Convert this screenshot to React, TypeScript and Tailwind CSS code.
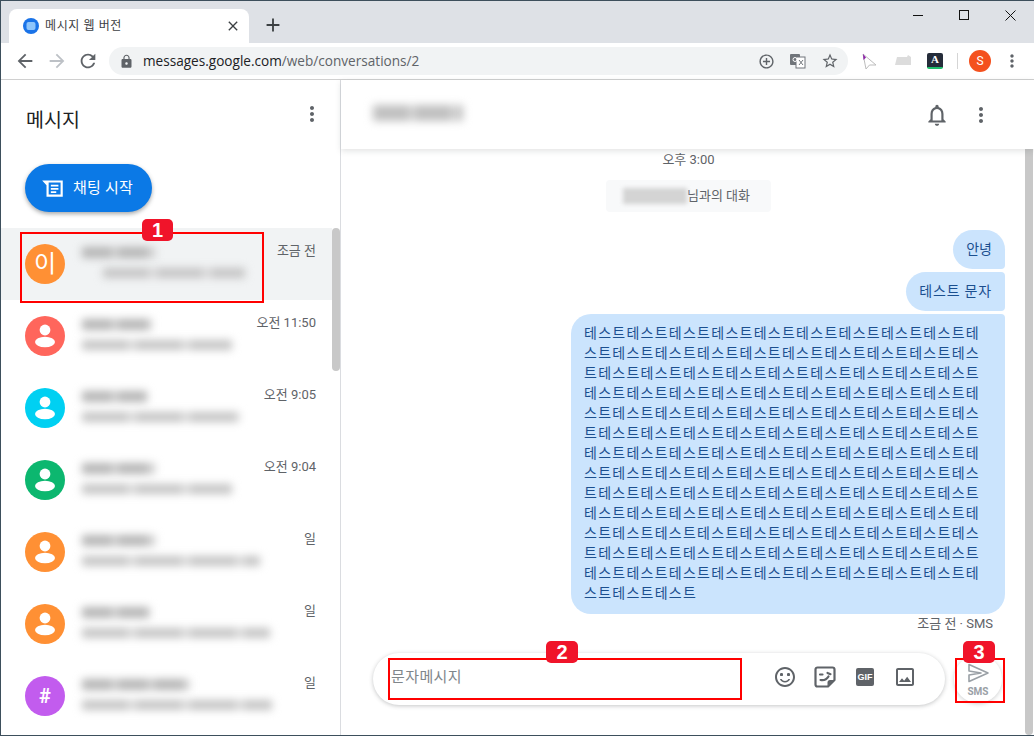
import React from "react";
import {
  MdArrowBack,
  MdArrowForward,
  MdRefresh,
  MdLock,
  MdMoreVert,
  MdClose,
  MdAdd,
  MdStarBorder,
  MdAddCircleOutline,
  MdNotificationsNone,
  MdSentimentSatisfiedAlt,
  MdOutlineImage,
} from "react-icons/md";

const KR = "font-['Roboto','Noto_Sans_CJK_KR',sans-serif]";

const PersonIcon = () => (
  <svg width="40" height="40" viewBox="0 0 40 40">
    <circle cx="20" cy="14" r="5.4" fill="#fff" />
    <ellipse cx="20" cy="26" rx="10" ry="5.2" fill="#fff" />
  </svg>
);

const conversations = [
  { color: "bg-[#ff9034]", label: "이", time: "조금 전", name: 73, msg: 142, msgLeft: 21, active: true },
  { color: "bg-[#ff665c]", time: "오전 11:50", name: 70, msg: 150 },
  { color: "bg-[#00d0f2]", time: "오전 9:05", name: 65, msg: 158 },
  { color: "bg-[#0cb76f]", time: "오전 9:04", name: 73, msg: 150 },
  { color: "bg-[#ff9034]", time: "일", name: 73, msg: 178 },
  { color: "bg-[#ff9034]", time: "일", name: 68, msg: 188 },
  { color: "bg-[#c25cee]", label: "#", time: "일", name: 108, msg: 190 },
];

const ConversationRow = ({ item }: { item: (typeof conversations)[number] }) => (
  <div className={`h-[72px] flex pl-6 pr-4 pt-4 ${item.active ? "bg-[#f1f3f4]" : "bg-white"}`}>
    <div className={`w-10 h-10 rounded-full shrink-0 flex items-center justify-center text-white ${item.color} ${item.label === "이" ? "text-[24px]" : "text-[20px] font-bold"}`}>
      {item.label || <PersonIcon />}
    </div>
    <div className="ml-[17px] flex-1 pt-[3px]">
      <div
        className="h-[11px] blur-[4px] bg-[repeating-linear-gradient(90deg,#b4b4b4_0_30px,#d2d2d2_30px_36px)]"
        style={{ width: item.name }}
      />
      <div
        className="h-[10px] mt-[10px] blur-[4px] bg-[repeating-linear-gradient(90deg,#c4c4c4_0_46px,#dcdcdc_46px_54px)]"
        style={{ width: item.msg, marginLeft: item.msgLeft || 0 }}
      />
    </div>
    <span className="text-[13px] leading-[16px] mt-[-1px] text-[#5f6368] whitespace-nowrap">{item.time}</span>
  </div>
);

const Badge = ({ n, className }: { n: number; className: string }) => (
  <div className={`absolute h-[22px] rounded-[5px] bg-[#f0142a] text-white text-[20px] font-bold leading-[22px] text-center font-['Liberation_Sans',sans-serif] ${className}`}>
    {n}
  </div>
);

const BrowserChrome = () => (
  <>
    <div className="h-[42px] bg-[#dee1e6] flex items-end pl-[8px] shrink-0">
      <div className="w-[240px] h-[34px] bg-white rounded-t-[8px] flex items-center pl-[14px] pr-[8px]">
        <svg width="16" height="16" viewBox="0 0 16 16" className="shrink-0">
          <circle cx="8" cy="8" r="8" fill="#1a73e8" />
          <rect x="3.5" y="4" width="9" height="8" rx="2" fill="#8ec5fb" />
        </svg>
        <span className="ml-[6px] text-[12px] tracking-[0.6px] text-[#3c4043] whitespace-nowrap">메시지 웹 버전</span>
        <MdClose className="ml-auto text-[#3c4043]" size={16} />
      </div>
      <MdAdd className="ml-[13px] mb-[7px] text-[#3c4043]" size={22} />
      <div className="ml-auto self-start flex pr-[9px] pt-[4px] gap-[26px]">
        <svg width="20" height="20" viewBox="0 0 20 20" stroke="#111" fill="none">
          <path d="M0 10.5H10" />
        </svg>
        <svg width="20" height="20" viewBox="0 0 20 20" stroke="#111" fill="none">
          <rect x="0.5" y="0.5" width="9" height="9" transform="translate(0 5)" />
        </svg>
        <svg width="20" height="20" viewBox="0 0 20 20" stroke="#111" fill="none">
          <path d="M0.5 5.5L10.5 15.5M10.5 5.5L0.5 15.5" />
        </svg>
      </div>
    </div>
    <div className="h-[37px] bg-white border-b border-[#d0d0d0] flex items-center pl-[13px] shrink-0">
      <MdArrowBack size={22} className="text-[#5f6368]" />
      <MdArrowForward size={22} className="ml-[10px] text-[#bdc1c6]" />
      <MdRefresh size={22} className="ml-[9px] text-[#5f6368]" />
      <div className="ml-[10px] w-[739px] h-[28px] rounded-full bg-[#f1f3f4] flex items-center pl-[10px] pr-[9px]">
        <MdLock size={15} className="text-[#5f6368]" />
        <span className="ml-[9px] text-[13.6px] font-['Open_Sans',sans-serif] text-[#202124] whitespace-nowrap">
          messages.google.com<span className="text-[#5f6368]">/web/conversations/2</span>
        </span>
        <MdAddCircleOutline size={17} className="ml-auto text-[#5f6368]" />
        <svg width="16" height="16" viewBox="0 0 16 16" className="ml-[15px]">
          <rect x="0" y="1" width="10" height="11" rx="1" fill="#70757a" />
          <rect x="6" y="4" width="9" height="11" fill="#fff" stroke="#70757a" />
          <path d="M9 7l4 5M13 7l-4 5" stroke="#70757a" />
          <circle cx="5" cy="6.500" r="2" fill="none" stroke="#fff" />
        </svg>
        <MdStarBorder size={18} className="ml-[15px] text-[#5f6368]" />
      </div>
      <svg width="16" height="18" viewBox="0 0 16 18" className="ml-[13px]">
        <path d="M2 2L15 13H8.500L5 17Z" fill="#fff" stroke="#bdbdbd" />
        <path d="M2 2L5 5.500L2.500 8Z" fill="#8e24aa" />
      </svg>
      <svg width="18" height="14" viewBox="0 0 18 14" className="ml-[17px]">
        <path d="M3 3H13L14 1L17 3V11H1Z" fill="#dcdcdc" />
      </svg>
      <div className="ml-[15px] w-[16px] h-[16px] rounded-[2px] bg-[#252c3a] text-white text-[11px] leading-[13px] text-center font-bold font-['Liberation_Serif',serif] border-b-2 border-[#1fbf6b]">
        A
      </div>
      <div className="ml-[14px] w-px h-[16px] bg-[#d5d5d5]" />
      <div className="ml-[11px] w-[22px] h-[22px] rounded-full bg-[#f4511e] text-white text-[12px] leading-[22px] text-center">S</div>
      <MdMoreVert size={20} className="ml-[11px] text-[#5f6368]" />
    </div>
  </>
);

const Sidebar = () => (
  <aside className="w-[340px] shrink-0 border-r border-[#dadce0] flex flex-col">
    <div className="h-[84px] shrink-0 flex items-start justify-between pl-[25px] pr-[16px] pt-[27px]">
      <span className="text-[19.5px] leading-[28px] text-[#202124]">메시지</span>
      <MdMoreVert size={24} className="text-[#5f6368] mt-[-5px]" />
    </div>
    <div className="h-[64px] shrink-0 pl-6">
      <button className="w-[127px] h-[48px] rounded-full bg-[#0b79e6] text-white flex items-center pl-[15px] shadow-[0_2px_4px_rgba(60,64,67,0.45)]">
        <svg width="26" height="26" viewBox="0 0 24 24" fill="#fff">
          <path d="M2 5h19v15H6V9.500L2 5zm6 2v11h11V7H8zm2 2h7v1.600h-7V9zm0 3h7v1.600h-7V12zm0 3h5v1.600h-5V15z" fillRule="evenodd" />
        </svg>
        <span className="ml-[7px] text-[15px] tracking-[0.2px] whitespace-nowrap">채팅 시작</span>
      </button>
    </div>
    <div className="flex-1 flex min-h-0">
      <div className="flex-1 overflow-hidden">
        {conversations.map((item, i) => (
          <ConversationRow key={i} item={item} />
        ))}
      </div>
      <div className="w-[8px] shrink-0">
        <div className="h-[143px] bg-[#c8c8c8] rounded-full" />
      </div>
    </div>
  </aside>
);

const Thread = () => (
  <div className={`flex-1 flex flex-col min-h-0 pr-5 pl-[31px] ${KR}`}>
    <div className="h-[22px] text-[13px] leading-[22px] text-center text-[#5f6368]">오후 3:00</div>
    <div className="self-center mt-[9px] h-[32px] w-[165px] rounded-[4px] bg-[#f8f9fa] flex items-center pl-[17px] text-[13px] text-[#5f6368]">
      <span className="w-[64px] h-[16px] bg-[#d4d4d4] blur-[2px]" />
      <span className="whitespace-nowrap">님과의 대화</span>
    </div>
    <div className="mt-[18px] flex flex-col items-end gap-[3px]">
      <div className="h-[39px] px-[13px] flex items-center rounded-[20px] rounded-br-[4px] bg-[#cbe4fd] text-[14px] text-[#1b4f8f]">안녕</div>
      <div className="h-[39px] px-[13px] flex items-center rounded-[20px] rounded-r-[4px] bg-[#cbe4fd] text-[14px] text-[#1b4f8f] tracking-[0.8px]">테스트 문자</div>
      <div className="w-[434px] h-[300px] pl-[13px] pr-[23px] pt-[8px] rounded-[20px] rounded-tr-[4px] bg-[#cbe4fd] text-[14px] leading-[20px] tracking-[1.26px] break-all text-[#1b4f8f] font-['Noto_Sans_CJK_KR',sans-serif]">
        {"테스트".repeat(124)}
      </div>
    </div>
    <div className="mt-[1px] text-right pr-[12px] text-[13px] leading-[18px] text-[#5f6368]">조금 전 · SMS</div>
    <div className="mt-[20px] flex items-center -mr-[8px] ml-px">
      <div className="w-[572px] h-[52px] rounded-[26px] bg-white shadow-[0_1px_4px_rgba(60,64,67,0.3)] flex items-center pl-[18px] pr-[20px] pb-1">
        <span className="text-[15px] tracking-[0.4px] text-[#80868b]">문자메시지</span>
        <span className="ml-auto w-10 flex justify-center">
          <MdSentimentSatisfiedAlt size={24} className="text-[#5f6368]" />
        </span>
        <span className="w-10 flex justify-center">
          <svg width="24" height="24" viewBox="0 0 24 24" fill="none" stroke="#5f6368" strokeWidth="2.2">
            <path d="M2.500 4.500a2 2 0 0 1 2-2h15a2 2 0 0 1 2 2V15l-6.500 6.500H4.500a2 2 0 0 1-2-2Z" strokeLinejoin="round" />
            <path d="M21 15h-4a2.500 2.500 0 0 0-2.500 2.500V21Z" fill="#5f6368" stroke="none" />
            <path d="M7 9.500h2.500M14.500 8l3 1.200M7.500 15c3.500.6 6.500-1 8-3.500" strokeLinecap="round" />
          </svg>
        </span>
        <span className="w-10 flex justify-center">
          <span className="w-[18px] h-[18px] rounded-[2px] bg-[#5f6368] text-white text-[9px] font-bold leading-[18px] text-center font-['Liberation_Sans',sans-serif]">GIF</span>
        </span>
        <span className="w-10 flex justify-center">
          <MdOutlineImage size={24} className="text-[#5f6368]" />
        </span>
      </div>
      <div className="ml-[9px] w-[48px] h-[48px] rounded-full bg-white shadow-[0_1px_4px_rgba(60,64,67,0.25)] flex flex-col items-center pt-[6px] text-[#9aa0a6]">
        <svg width="24" height="24" viewBox="0 0 24 24" fill="none" stroke="currentColor" strokeWidth="1.6" strokeLinejoin="round">
          <path d="M3 3.500L22 12L3 20.500V14L15 12L3 10Z" />
        </svg>
        <span className="text-[10px] leading-[12px] font-bold mt-[1px]">SMS</span>
      </div>
    </div>
  </div>
);

export default function App() {
  return (
    <div className={`relative w-[1034px] h-[736px] overflow-hidden bg-white border-t border-l border-b border-[#3d4f5c] flex flex-col ${KR}`}>
      <BrowserChrome />
      <main className="flex-1 flex min-h-0">
        <Sidebar />
        <section className="flex-1 flex flex-col min-w-0">
          <header className="relative z-10 h-[69px] shrink-0 bg-white shadow-[0_2px_6px_rgba(60,64,67,0.15)] flex items-center pl-[32px] pr-[41px]">
            <div className="w-[90px] h-[16px] mt-[-4px] blur-[4px] bg-[repeating-linear-gradient(90deg,#c0c0c0_0_36px,#d8d8d8_36px_42px)]" />
            <MdNotificationsNone size={26} className="ml-auto text-[#5f6368]" />
            <MdMoreVert size={24} className="ml-[19px] text-[#5f6368]" />
          </header>
          <div className="flex-1 flex min-h-0">
            <Thread />
            <div className="w-[8px] shrink-0 mr-px">
              <div className="h-full bg-[#c8c8c8] rounded-b-full" />
            </div>
          </div>
        </section>
      </main>

      {/* numbered red callouts */}
      <div className="absolute left-[19px] top-[231px] w-[244px] h-[71px] border-2 border-[#ff0000]" />
      <Badge n={1} className="left-[141px] top-[218px] w-[31px]" />
      <div className="absolute left-[387px] top-[657px] w-[354px] h-[42px] border-2 border-[#ff0000]" />
      <Badge n={2} className="left-[545px] top-[640px] w-[32px]" />
      <div className="absolute left-[954px] top-[657px] w-[50px] h-[45px] border-2 border-[#ff0000]" />
      <Badge n={3} className="left-[962px] top-[640px] w-[32px]" />
    </div>
  );
}
